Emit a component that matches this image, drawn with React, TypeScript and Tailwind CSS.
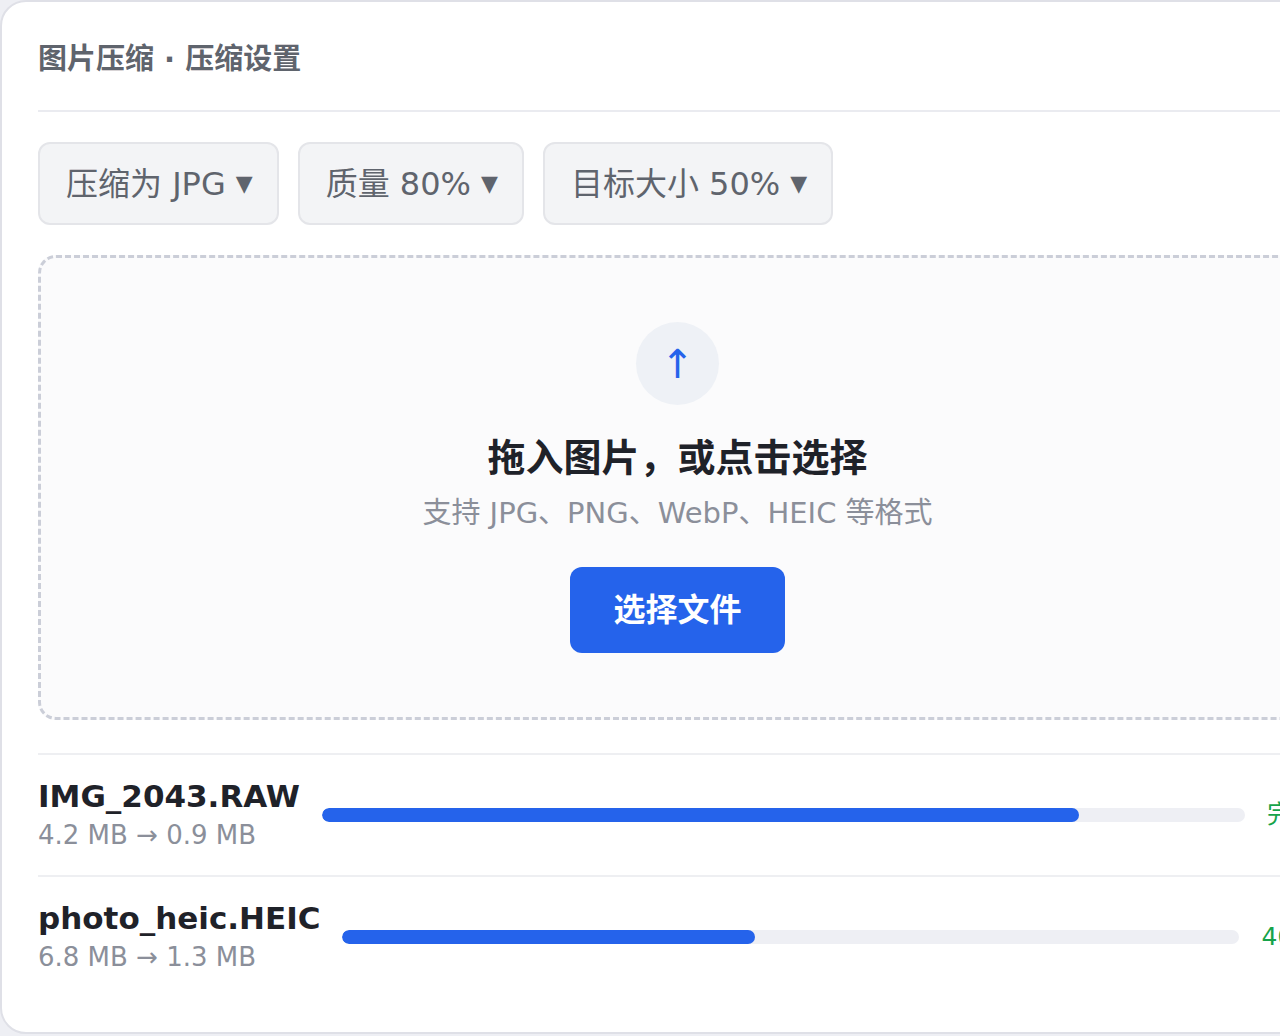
import React from 'react';

const selects = [
  { id: 'format', label: '输出格式', value: '压缩为 JPG', options: ['压缩为 JPG', '压缩为 PNG', '压缩为 WebP'] },
  { id: 'quality', label: '压缩质量', value: '质量 80%', options: ['质量 60%', '质量 80%', '质量 90%'] },
  { id: 'size', label: '目标大小', value: '目标大小 50%', options: ['目标大小 30%', '目标大小 50%', '目标大小 70%'] },
];

const files = [
  { name: 'IMG_2043.RAW', size: '4.2 MB → 0.9 MB', progress: 82, status: '完成' },
  { name: 'photo_heic.HEIC', size: '6.8 MB → 1.3 MB', progress: 46, status: '46%' },
];

function Toolbar() {
  return (
    <div className="flex gap-[19px] mt-[30px]">
      {selects.map((s) => (
        <label
          key={s.id}
          htmlFor={s.id}
          className="flex items-center gap-2.5 h-[83px] pl-[26px] pr-6 rounded-xl border-2 border-[#e4e5e9] bg-[#f3f4f6] text-[32px] text-[#5f646d]"
        >
          <select
            id={s.id}
            aria-label={s.label}
            defaultValue={s.value}
            className="appearance-none field-sizing-content bg-transparent outline-none"
          >
            {s.options.map((o) => (
              <option key={o}>{o}</option>
            ))}
          </select>
          <span aria-hidden="true" className="text-[22px]">▼</span>
        </label>
      ))}
    </div>
  );
}

function DropZone() {
  return (
    <div className="flex flex-col items-center mt-[30px] py-16 rounded-[18px] border-3 border-dashed border-[#cbced8] bg-[#fbfbfc]">
      <div className="flex items-center justify-center size-[83px] rounded-full bg-[#eef1f6] text-[40px] text-[#2563eb]">
        ↑
      </div>
      <h2 className="mt-7 text-[38px] leading-[50px] font-bold text-[#1f2229]">拖入图片，或点击选择</h2>
      <p className="mt-2.5 text-[29px] leading-[40px] text-[#8b8f9a]">支持 JPG、PNG、WebP、HEIC 等格式</p>
      <button type="button" className="mt-[34px] h-[86px] px-[43px] rounded-xl bg-[#2563eb] text-[32px] font-bold text-white">
        选择文件
      </button>
    </div>
  );
}

function FileList() {
  return (
    <ul className="mt-[33px]">
      {files.map((f) => (
        <li key={f.name} className="flex items-center gap-[22px] h-[122px] border-t-2 border-[#eeeff2]">
          <div>
            <div className="text-[31px] leading-[40px] font-bold text-[#1f2229]">{f.name}</div>
            <div className="text-[26px] leading-[38px] text-[#8b8f9a]">{f.size}</div>
          </div>
          <div className="flex-1 h-3.5 rounded-full bg-[#eeeff4] overflow-hidden">
            <div className="h-full rounded-full bg-[#2563eb]" style={{ width: `${f.progress}%` }} />
          </div>
          <span className="text-[25px] text-[#16a34a]">{f.status}</span>
        </li>
      ))}
    </ul>
  );
}

export default function App() {
  return (
    <div className="min-h-screen overflow-hidden bg-[#eeeff4] font-['DejaVu_Sans','Noto_Sans_CJK_SC',sans-serif]">
      <main lang="zh-CN" className="-mr-[75px] px-9 pb-[35px] rounded-[26px] border-2 border-[#dfe0e7] bg-white">
        <h1 className="pt-[37px] pb-[31px] border-b-2 border-[#eaebf0] text-[29px] leading-[40px] font-bold text-[#5f646d]">
          图片压缩 · 压缩设置
        </h1>
        <Toolbar />
        <DropZone />
        <FileList />
      </main>
    </div>
  );
}
